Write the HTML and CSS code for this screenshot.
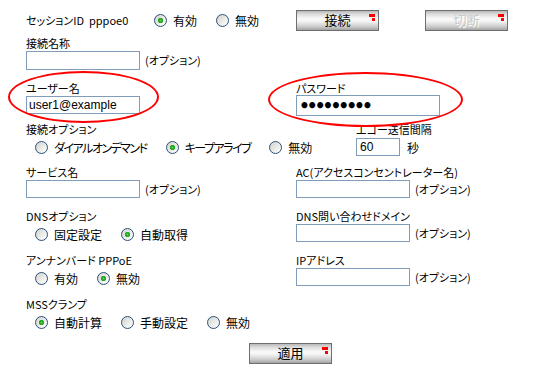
FILE: index.html
```html
<!DOCTYPE html>
<html lang="ja">
<head>
<meta charset="utf-8">
<title>PPPoE設定</title>
<link rel="stylesheet" href="styles.css">
</head>
<body>
<form class="page">
  <div class="top">
    <span class="sid">セッションID&nbsp;&nbsp;pppoe0</span>
    <div class="radios top-radios">
      <label class="opt"><input class="radio" type="radio" name="en" checked>有効</label>
      <label class="opt"><input class="radio" type="radio" name="en">無効</label>
    </div>
    <div class="btns">
      <button type="button" class="btn">接続<svg class="mark" width="6" height="7" viewBox="0 0 6 7"><rect x="0" y="0" width="3" height="3" fill="#f00"/><rect x="3" y="0" width="3" height="3" fill="#e00"/><rect x="3" y="4" width="3" height="3" fill="#f00"/></svg></button>
      <button type="button" class="btn disabled">切断<svg class="mark" width="6" height="7" viewBox="0 0 6 7"><rect x="0" y="0" width="3" height="3" fill="#f00"/><rect x="3" y="0" width="3" height="3" fill="#e00"/><rect x="3" y="4" width="3" height="3" fill="#f00"/></svg></button>
    </div>
  </div>

  <div class="field f-name">
    <div class="lbl">接続名称</div>
    <div class="ctl"><input class="text" type="text"><span class="opt-note">(オプション)</span></div>
  </div>

  <div class="pair f-user">
    <div class="field">
      <div class="lbl">ユーザー名</div>
      <div class="ctl"><input class="text user" type="text" value="user1@example"></div>
    </div>
    <div class="field">
      <div class="lbl">パスワード</div>
      <div class="ctl"><input class="text pass" type="password" value="123456789"></div>
    </div>
  </div>

  <div class="pair wide f-conn">
    <div class="field">
      <div class="lbl">接続オプション</div>
      <div class="radios">
        <label class="opt kana"><input class="radio" type="radio" name="co">ダイアルオンデマンド</label>
        <label class="opt kana"><input class="radio" type="radio" name="co" checked>キープアライブ</label>
        <label class="opt"><input class="radio" type="radio" name="co">無効</label>
      </div>
    </div>
    <div class="field">
      <div class="lbl">エコー送信間隔</div>
      <div class="ctl echo"><input class="text num" type="text" value="60"><span class="unit">秒</span></div>
    </div>
  </div>

  <div class="pair f-svc">
    <div class="field">
      <div class="lbl">サービス名</div>
      <div class="ctl"><input class="text" type="text"><span class="opt-note">(オプション)</span></div>
    </div>
    <div class="field">
      <div class="lbl">AC(アクセスコンセントレーター名)</div>
      <div class="ctl"><input class="text" type="text"><span class="opt-note">(オプション)</span></div>
    </div>
  </div>

  <div class="pair f-dns">
    <div class="field">
      <div class="lbl">DNSオプション</div>
      <div class="radios">
        <label class="opt"><input class="radio" type="radio" name="dns">固定設定</label>
        <label class="opt"><input class="radio" type="radio" name="dns" checked>自動取得</label>
      </div>
    </div>
    <div class="field">
      <div class="lbl">DNS問い合わせドメイン</div>
      <div class="ctl"><input class="text" type="text"><span class="opt-note">(オプション)</span></div>
    </div>
  </div>

  <div class="pair f-unn">
    <div class="field">
      <div class="lbl">アンナンバード PPPoE</div>
      <div class="radios">
        <label class="opt"><input class="radio" type="radio" name="un">有効</label>
        <label class="opt"><input class="radio" type="radio" name="un" checked>無効</label>
      </div>
    </div>
    <div class="field">
      <div class="lbl">IPアドレス</div>
      <div class="ctl"><input class="text" type="text"><span class="opt-note">(オプション)</span></div>
    </div>
  </div>

  <div class="field f-mss">
    <div class="lbl">MSSクランプ</div>
    <div class="radios">
      <label class="opt"><input class="radio" type="radio" name="mss" checked>自動計算</label>
      <label class="opt"><input class="radio" type="radio" name="mss">手動設定</label>
      <label class="opt"><input class="radio" type="radio" name="mss">無効</label>
    </div>
  </div>

  <div class="actions">
    <button type="button" class="btn">適用<svg class="mark" width="6" height="7" viewBox="0 0 6 7"><rect x="0" y="0" width="3" height="3" fill="#f00"/><rect x="3" y="0" width="3" height="3" fill="#e00"/><rect x="3" y="4" width="3" height="3" fill="#f00"/></svg></button>
  </div>

  <div class="ring ring-user"></div>
  <div class="ring ring-pass"></div>
</form>
</body>
</html>
```

FILE: styles.css
```css
html, body {
  margin: 0;
  padding: 0;
  background: #fff;
}

.page {
  position: relative;
  width: 534px;
  height: 372px;
  box-sizing: border-box;
  padding: 10px 0 0 26px;
  margin: 0;
  font: 11px/15px "Noto Sans CJK JP", sans-serif;
  font-feature-settings: "palt";
  color: #000;
  overflow: hidden;
}

.top {
  display: flex;
  align-items: center;
  height: 21px;
}

.sid {
  width: 128px;
  font-size: 11px;
}

.top-radios {
  width: 142px;
  padding-left: 0 !important;
  height: 21px !important;
}

.btns {
  display: flex;
  gap: 46px;
}

.btn {
  position: relative;
  width: 83px;
  height: 21px;
  box-sizing: border-box;
  margin: 0;
  padding: 0 0 1px;
  border: 1px solid #6e6e6e;
  border-radius: 0;
  background: linear-gradient(#b9b9b9 0%, #dedede 18%, #fafafa 42%, #f2f2f2 55%, #cfcfcf 80%, #a4a4a4 100%);
  font: 13px/18px "Noto Sans CJK JP", sans-serif;
  color: #000;
}

.btn.disabled {
  color: #c9c9c9;
  text-shadow: 1px 1px 0 #fff;
}

.mark {
  position: absolute;
  top: 3px;
  right: 3px;
  display: block;
}

.field {
  display: flex;
  flex-direction: column;
}

.lbl {
  height: 15px;
  white-space: nowrap;
}

.ctl {
  display: flex;
  align-items: center;
}

.text {
  width: 114px;
  height: 18px;
  box-sizing: border-box;
  margin: 0;
  padding: 0 3px;
  border: 1px solid #7f9db9;
  background: #fff;
  font: 12px "Liberation Sans", sans-serif;
  color: #000;
  outline: none;
}

.opt-note {
  margin-left: 5px;
}

.pair {
  display: grid;
  grid-template-columns: 270px auto;
}

.pair.wide {
  grid-template-columns: 330px auto;
}

.f-name {
  margin-top: 5px;
}

.f-name .text {
  height: 19px;
}

.f-user {
  margin-top: 11px;
}

.text.user {
  height: 18px;
  font: 12px "Liberation Sans", sans-serif;
  padding: 0 2px;
}

.text.pass {
  width: 144px;
  height: 21px;
  margin-top: -1px;
  font: bold 17px "DejaVu Sans", sans-serif;
  letter-spacing: -3px;
  padding: 0 2px;
}

.f-conn {
  margin-top: 6px;
}

.echo {
  margin-top: 1px;
}

.text.num {
  width: 44px;
  font: 12px "Liberation Sans", sans-serif;
}

.unit {
  margin-left: 7px;
  font-size: 12px;
}

.f-svc {
  margin-top: 8px;
}

.f-dns {
  margin-top: 11px;
}

.f-unn {
  margin-top: 9px;
}

.f-mss {
  margin-top: 9px;
}

.radios {
  display: flex;
  align-items: center;
  gap: 19px;
  height: 20px;
  padding-left: 9px;
}

.opt {
  display: flex;
  align-items: center;
  white-space: nowrap;
  font-size: 12px;
}

.opt.kana {
  letter-spacing: -1.5px;
}

.radio {
  appearance: none;
  -webkit-appearance: none;
  width: 13px;
  height: 13px;
  box-sizing: border-box;
  margin: 0 6px 0 0;
  border: 1px solid #2a4f7a;
  border-radius: 50%;
  background: linear-gradient(135deg, #d3d3cc 0%, #ecece8 55%, #ffffff 100%);
}

.radio:checked {
  background:
    radial-gradient(circle, #5fd65f 0, #22a322 1.6px, #2aa82a 2.4px, transparent 3px),
    linear-gradient(135deg, #d3d3cc 0%, #ecece8 55%, #ffffff 100%);
}

.actions {
  margin-top: 11px;
  padding-left: 223px;
}

.ring {
  position: absolute;
  box-sizing: border-box;
  border: 2px solid #f00;
  border-radius: 50%;
  pointer-events: none;
}

.ring-user {
  left: 8px;
  top: 71px;
  width: 151px;
  height: 52px;
}

.ring-pass {
  left: 268px;
  top: 72px;
  width: 195px;
  height: 55px;
}
```
